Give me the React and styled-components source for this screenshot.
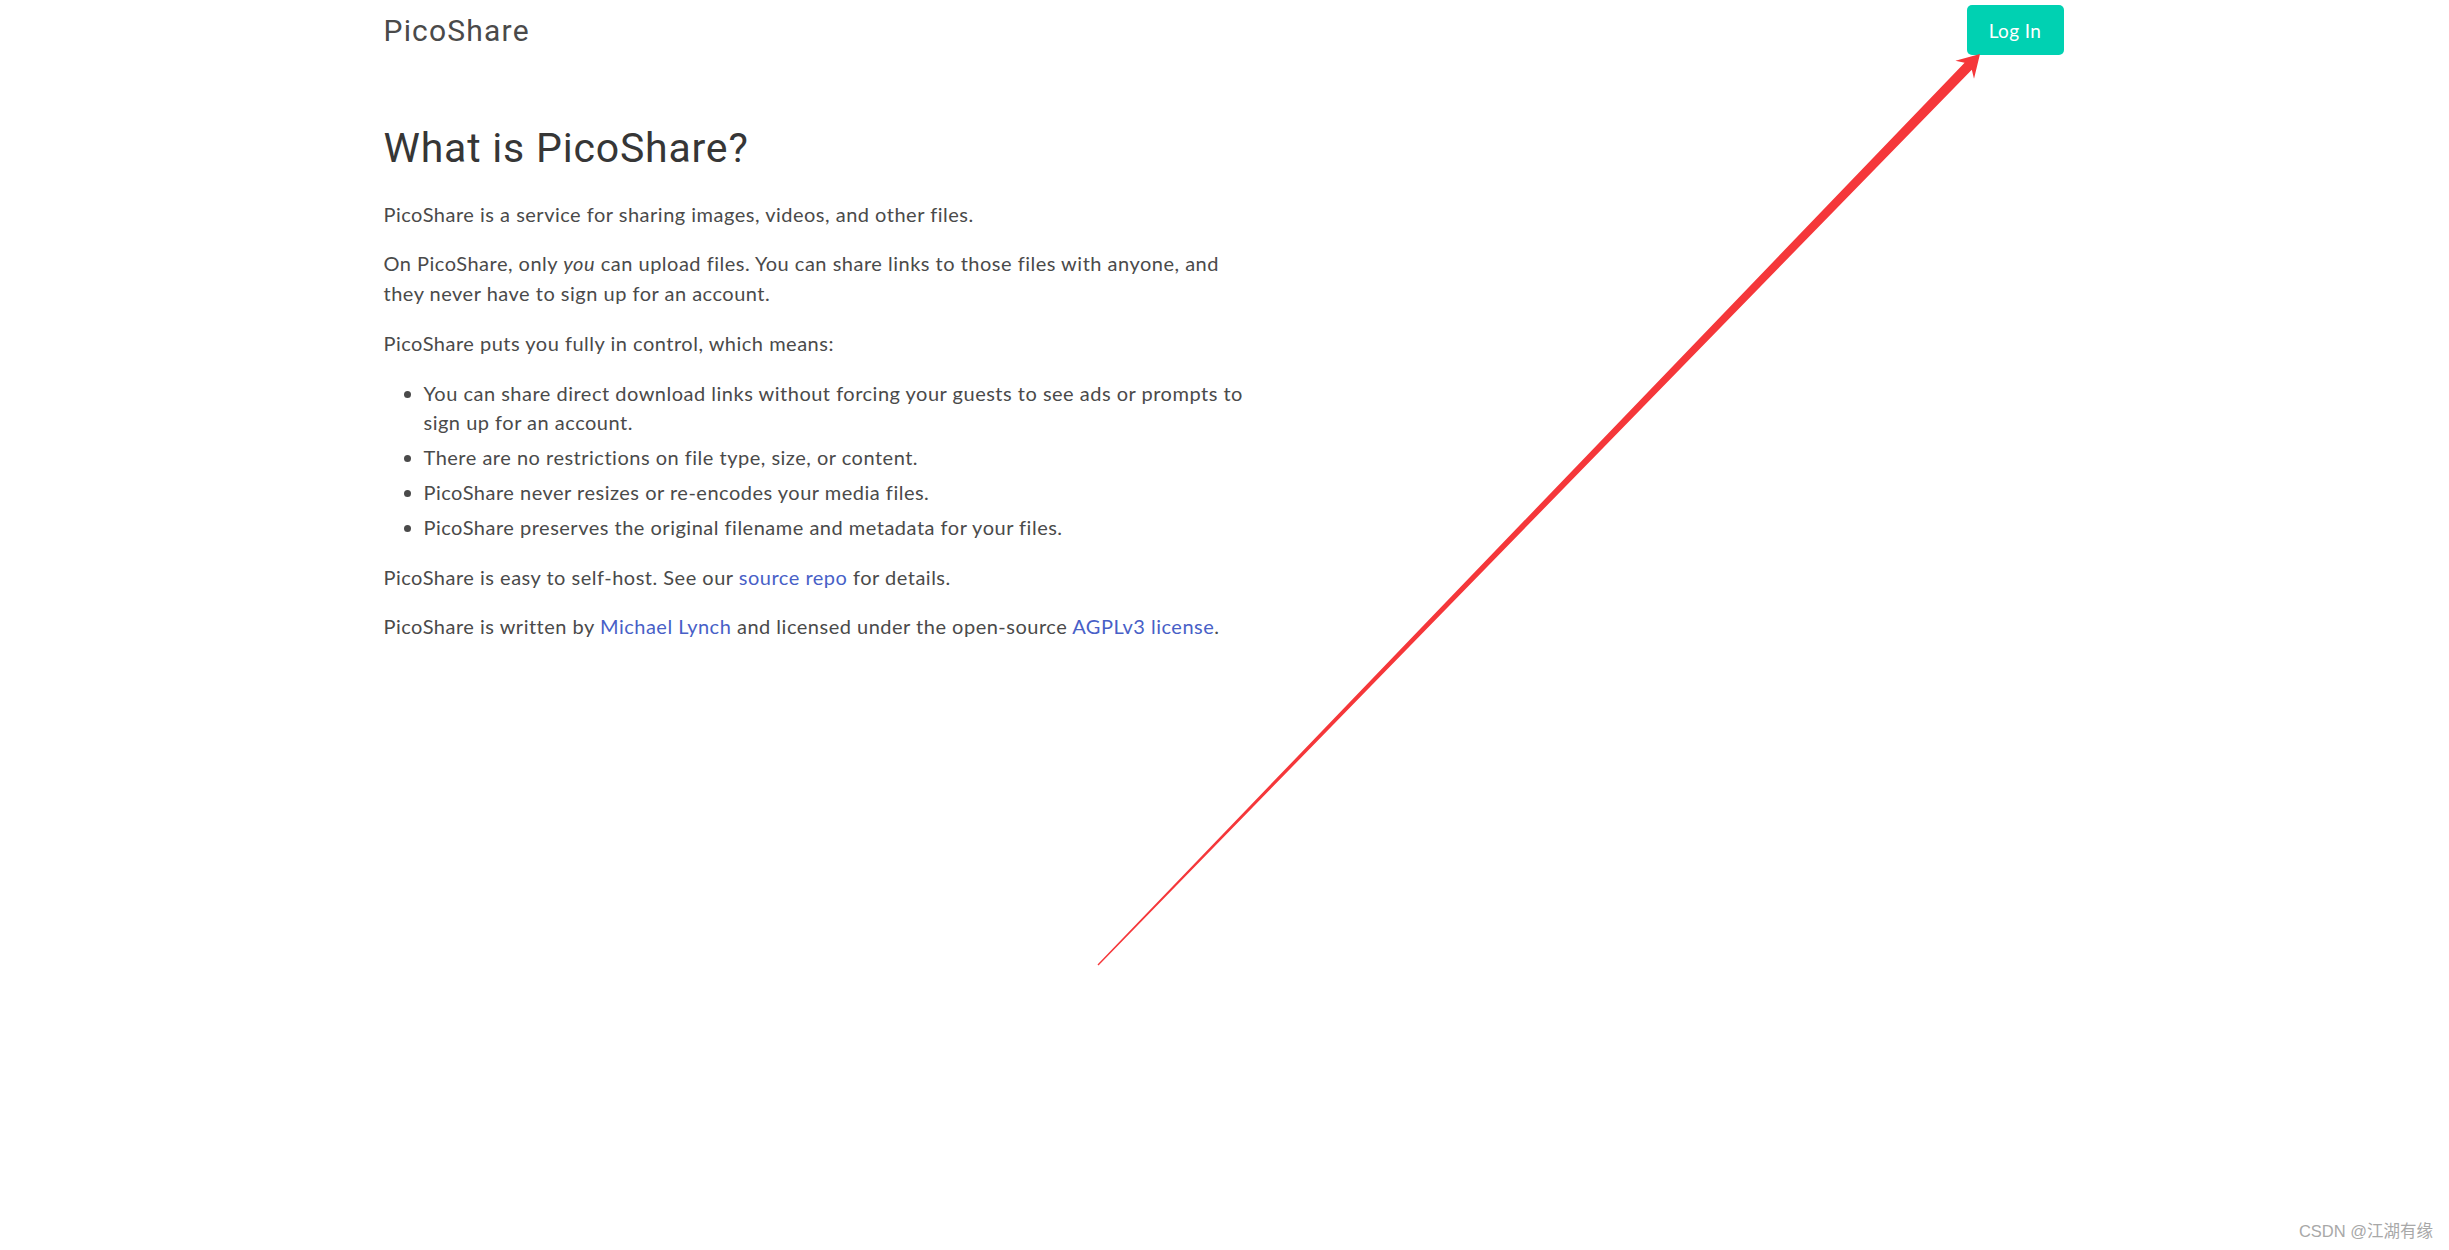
import { styled, createGlobalStyle } from 'styled-components';

const TAIL = { x: 1098, y: 965 };
const TIP = { x: 1980, y: 54 };

const arrowPoints = () => {
  const dx = TIP.x - TAIL.x;
  const dy = TIP.y - TAIL.y;
  const len = Math.hypot(dx, dy);
  const u = { x: dx / len, y: dy / len };
  const n = { x: -u.y, y: u.x };
  const at = (s, t) => `${(TIP.x - s * u.x + t * n.x).toFixed(1)},${(TIP.y - s * u.y + t * n.y).toFixed(1)}`;
  return [
    at(0, 0),
    at(22, 13),
    at(17, 5),
    at(len, 0.7),
    at(len, -0.7),
    at(17, -5),
    at(22, -13),
  ].join(' ');
};

const App = () => {
  return (
    <Page>
      <GlobalStyle />
      <Navbar>
        <Brand>PicoShare</Brand>
        <LoginButton>Log In</LoginButton>
      </Navbar>
      <Section>
        <Content>
          <Title>What is PicoShare?</Title>
          <Para>PicoShare is a service for sharing images, videos, and other files.</Para>
          <Para>
            On PicoShare, only <em>you</em> can upload files. You can share links to those files with
            anyone, and they never have to sign up for an account.
          </Para>
          <Para>PicoShare puts you fully in control, which means:</Para>
          <List>
            <Item>
              You can share direct download links without forcing your guests to see ads or prompts to
              sign up for an account.
            </Item>
            <Item>There are no restrictions on file type, size, or content.</Item>
            <Item>PicoShare never resizes or re-encodes your media files.</Item>
            <Item>PicoShare preserves the original filename and metadata for your files.</Item>
          </List>
          <Para>
            PicoShare is easy to self-host. See our <Link href="#">source repo</Link> for details.
          </Para>
          <Para>
            PicoShare is written by <Link href="#">Michael Lynch</Link> and licensed under the
            open-source <Link href="#">AGPLv3 license</Link>.
          </Para>
        </Content>
      </Section>
      <Arrow width="2449" height="1250" viewBox="0 0 2449 1250">
        <polygon points={arrowPoints()} fill="#f5373a" />
      </Arrow>
      <Watermark>CSDN @江湖有缘</Watermark>
    </Page>
  );
};

const GlobalStyle = createGlobalStyle`
  html, body {
    margin: 0;
    padding: 0;
    background: #fff;
  }
  body {
    font-family: Lato, "Noto Sans", sans-serif;
    color: #4a4a4a;
  }
`;

const Page = styled.div`
  position: relative;
  width: 2449px;
  height: 1250px;
  overflow: hidden;
`;

const Navbar = styled.nav`
  display: flex;
  justify-content: space-between;
  align-items: center;
  width: 1682px;
  height: 60px;
  margin: 0 auto;
`;

const Brand = styled.span`
  font-family: Roboto, sans-serif;
  font-size: 30px;
  letter-spacing: 1.2px;
  color: #4a4a4a;
`;

const LoginButton = styled.button`
  width: 97px;
  height: 50px;
  margin-right: 2px;
  border: none;
  border-radius: 5px;
  background-color: #00d1b2;
  color: #fff;
  font-family: Lato, sans-serif;
  font-size: 19px;
  letter-spacing: 0.4px;
  cursor: pointer;
`;

const Section = styled.section`
  width: 1682px;
  margin: 0 auto;
  padding-top: 66px;
`;

const Content = styled.div`
  width: 868px;
  font-size: 20px;
  line-height: 29.8px;
  letter-spacing: 0.5px;
`;

const Title = styled.h1`
  margin: 0 0 28.5px;
  font-family: Roboto, sans-serif;
  font-size: 41px;
  font-weight: 400;
  line-height: 45px;
  letter-spacing: 0.8px;
  color: #363636;
`;

const Para = styled.p`
  margin: 0 0 20px;
`;

const List = styled.ul`
  margin: 0 0 20px;
  padding-left: 40px;
`;

const Item = styled.li`
  & + & {
    margin-top: 5px;
  }
`;

const Link = styled.a`
  color: #485fc7;
  text-decoration: none;
`;

const Arrow = styled.svg`
  position: absolute;
  top: 0;
  left: 0;
  pointer-events: none;
`;

const Watermark = styled.div`
  position: absolute;
  right: 16px;
  bottom: 8px;
  font-family: "Liberation Sans", "Noto Sans CJK SC", sans-serif;
  font-size: 16.5px;
  color: #a8a8a8;
`;

export default App;
